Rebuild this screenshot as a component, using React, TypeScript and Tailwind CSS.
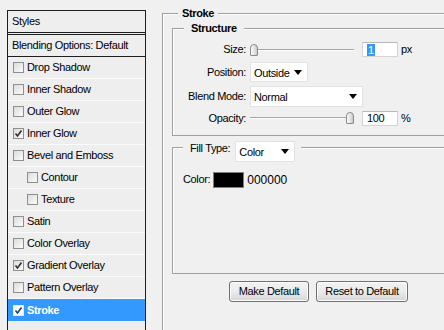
import React from 'react';

const Check = ({ checked, light }: { checked?: boolean; light?: boolean }) => (
  <span
    className={`flex h-[11px] w-[11px] shrink-0 items-center justify-center border ${
      light ? 'border-[#dfe9f5] bg-white' : 'border-[#8f8f8f] bg-gradient-to-br from-[#dcdcdc] to-[#fbfbfb]'
    }`}
  >
    {checked && (
      <svg width="9" height="9" viewBox="0 0 9 9">
        <path d="M1.5 4.5 L3.5 7 L7.5 1.5" fill="none" stroke={light ? '#1e3f78' : '#303030'} strokeWidth="1.6" />
      </svg>
    )}
  </span>
);

const styleRows: { label: string; checked?: boolean; indent?: boolean }[] = [
  { label: 'Drop Shadow' },
  { label: 'Inner Shadow' },
  { label: 'Outer Glow' },
  { label: 'Inner Glow', checked: true },
  { label: 'Bevel and Emboss' },
  { label: 'Contour', indent: true },
  { label: 'Texture', indent: true },
  { label: 'Satin' },
  { label: 'Color Overlay' },
  { label: 'Gradient Overlay', checked: true },
  { label: 'Pattern Overlay' },
];

const Arrow = () => (
  <svg width="8" height="5" viewBox="0 0 8 5" className="shrink-0">
    <path d="M0 0 H8 L4 5 Z" fill="#000" />
  </svg>
);

const Select = ({ value, w, h }: { value: string; w: string; h: string }) => (
  <div className={`flex ${w} ${h} shrink-0 items-center justify-between border border-[#e2e2e2] bg-white pl-[3px] pr-[5px] text-[11px]`}>
    <span className="pt-[2px]">{value}</span>
    <Arrow />
  </div>
);

const Thumb = () => (
  <div className="h-[12px] w-[8px] shrink-0 rounded-t-[4px] rounded-b-[1px] border border-[#8a8a8a] bg-gradient-to-r from-[#fafafa] via-[#e6e6e6] to-[#c8c8c8]" />
);

const Slider = ({ pos }: { pos: 'start' | 'end' }) => (
  <div className="flex w-[104px] items-center">
    {pos === 'start' && <Thumb />}
    <div className="h-[2px] flex-1 border-t border-[#a6a6a6] bg-white" />
    {pos === 'end' && <Thumb />}
  </div>
);

const Field = ({ children }: { children: React.ReactNode }) => (
  <div className="flex h-[15px] w-[36px] items-center border border-[#d4d4d4] border-t-[#b8b8b8] bg-white pl-[4px] text-[11px]">
    {children}
  </div>
);

const Btn = ({ children, w }: { children: React.ReactNode; w: string }) => (
  <button className={`h-[21px] ${w} rounded-[3px] border border-[#707070] bg-gradient-to-b from-[#f2f2f2] via-[#ebebeb] to-[#d6d6d6] text-[11px] text-black shadow-[inset_0_0_0_1px_#fcfcfc]`}>
    {children}
  </button>
);

export default function App() {
  return (
    <div
      className="flex h-[330px] w-[444px] overflow-hidden bg-[#f0f0f0] text-[11px] tracking-[-0.35px] text-black"
      style={{ fontFamily: '"Liberation Sans", Arial, sans-serif' }}
    >
      {/* Styles list */}
      <div className="ml-[7px] mt-[10px] flex h-[340px] w-[139px] shrink-0 flex-col border border-[#1e1e1e] bg-[#eeeeee]">
        <div className="flex h-[24px] shrink-0 items-center border-b-[3px] border-double border-[#1e1e1e] pl-[4px]">Styles</div>
        <div className="flex h-[22px] shrink-0 items-center border-b border-[#1e1e1e] pl-[4px]">Blending Options: Default</div>
        {styleRows.map(r => (
          <div
            key={r.label}
            className={`flex h-[22px] shrink-0 items-center gap-[3px] border-b border-[#fbfbfb] ${r.indent ? 'pl-[19px]' : 'pl-[5px]'}`}
          >
            <Check checked={r.checked} />
            <span>{r.label}</span>
          </div>
        ))}
        <div className="flex h-[22px] shrink-0 items-center gap-[3px] bg-[#3399ff] pl-[5px] font-bold text-white">
          <Check checked light />
          <span>Stroke</span>
        </div>
      </div>

      {/* Stroke settings */}
      <fieldset className="ml-[16px] mt-[6px] h-[340px] w-[290px] shrink-0 border border-[#a0a0a0] pl-[9px] shadow-[inset_1px_1px_0_#ffffff]">
        <legend className="ml-[6px] h-[14px] bg-[#f0f0f0] px-[4px] font-bold leading-[14px]">Stroke</legend>

        <fieldset className="mt-[1px] border border-[#a0a0a0] pb-[8px] shadow-[inset_1px_1px_0_#ffffff]">
          <legend className="ml-[11px] h-[14px] bg-[#f0f0f0] px-[7px] font-bold leading-[14px]">Structure</legend>
          <div className="grid grid-cols-[73px_1fr] items-center gap-x-[4px] pt-[7px]">
            <span className="h-[15px] text-right leading-[15px]">Size:</span>
            <div className="flex h-[15px] items-center">
              <Slider pos="start" />
              <div className="ml-[8px]">
                <Field>
                  <span className="bg-[#3399ff] px-[1px] leading-[12px] text-white">1</span>
                </Field>
              </div>
              <span className="ml-[3px]">px</span>
            </div>

            <span className="mt-[5px] text-right">Position:</span>
            <div className="mt-[5px]">
              <Select value="Outside" w="w-[58px]" h="h-[20px]" />
            </div>

            <span className="mt-[4px] text-right">Blend Mode:</span>
            <div className="mt-[4px]">
              <Select value="Normal" w="w-[113px]" h="h-[21px]" />
            </div>

            <span className="mt-[3px] text-right">Opacity:</span>
            <div className="mt-[3px] flex h-[15px] items-center">
              <Slider pos="end" />
              <div className="ml-[8px]">
                <Field>100</Field>
              </div>
              <span className="ml-[3px]">%</span>
            </div>
          </div>
        </fieldset>

        <fieldset className="mt-[5px] h-[133px] border border-[#a0a0a0] shadow-[inset_1px_1px_0_#ffffff]">
          <legend className="ml-[10px] flex h-[14px] items-start bg-[#f0f0f0] pl-[7px] pr-[6px]">
            <span className="leading-[14px]">Fill Type:</span>
            <div className="ml-[5px]">
              <Select value="Color" w="w-[60px]" h="h-[21px]" />
            </div>
          </legend>
          <div className="mt-[16px] flex items-center pl-[10px]">
            <span>Color:</span>
            <div className="ml-[3px] h-[16px] w-[31px] border border-[#808080] bg-black" />
            <span className="ml-[3px] text-[12px] tracking-normal">000000</span>
          </div>
        </fieldset>

        <div className="mt-[7px] flex gap-[7px] pl-[57px]">
          <Btn w="w-[80px]">Make Default</Btn>
          <Btn w="w-[92px]">Reset to Default</Btn>
        </div>
      </fieldset>
    </div>
  );
}
